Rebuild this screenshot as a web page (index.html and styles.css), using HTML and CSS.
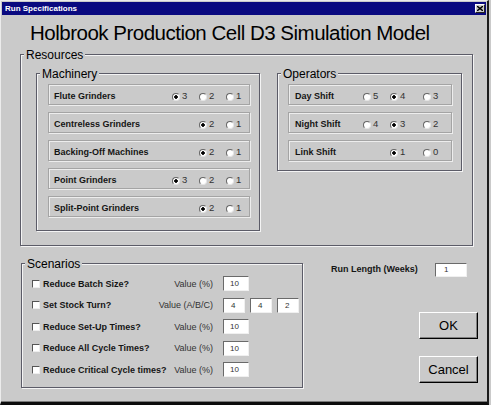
FILE: index.html
```html
<!DOCTYPE html>
<html lang="en">
<head>
    <meta charset="UTF-8">
    <meta name="viewport" content="width=device-width, initial-scale=1.0">
    <title>Run Specifications</title>
    <link rel="stylesheet" href="styles.css">
</head>
<body>
<div class="window">
    <div class="titlebar">
        <span class="titlebar-text">Run Specifications</span>
        <span class="close-btn">
            <svg width="6" height="5" viewBox="0 0 6 5"><path d="M0 0L6 5M6 0L0 5" stroke="#000" stroke-width="1.4"/></svg>
        </span>
    </div>

    <h1 class="heading">Holbrook Production Cell D3 Simulation Model</h1>

    <fieldset class="group resources">
        <legend>Resources</legend>
        <div class="resources-body">
            <fieldset class="group machinery">
                <legend>Machinery</legend>
                <div class="group-body">
                    <div class="opt-row mach-row">
                        <span class="row-label">Flute Grinders</span>
                        <span class="radio"><span class="dot on"></span>3</span>
                        <span class="radio"><span class="dot"></span>2</span>
                        <span class="radio"><span class="dot"></span>1</span>
                    </div>
                    <div class="opt-row mach-row">
                        <span class="row-label">Centreless Grinders</span>
                        <span></span>
                        <span class="radio"><span class="dot on"></span>2</span>
                        <span class="radio"><span class="dot"></span>1</span>
                    </div>
                    <div class="opt-row mach-row">
                        <span class="row-label">Backing-Off Machines</span>
                        <span></span>
                        <span class="radio"><span class="dot on"></span>2</span>
                        <span class="radio"><span class="dot"></span>1</span>
                    </div>
                    <div class="opt-row mach-row">
                        <span class="row-label">Point Grinders</span>
                        <span class="radio"><span class="dot on"></span>3</span>
                        <span class="radio"><span class="dot"></span>2</span>
                        <span class="radio"><span class="dot"></span>1</span>
                    </div>
                    <div class="opt-row mach-row">
                        <span class="row-label">Split-Point Grinders</span>
                        <span></span>
                        <span class="radio"><span class="dot on"></span>2</span>
                        <span class="radio"><span class="dot"></span>1</span>
                    </div>
                </div>
            </fieldset>

            <fieldset class="group operators">
                <legend>Operators</legend>
                <div class="group-body">
                    <div class="opt-row oper-row">
                        <span class="row-label">Day Shift</span>
                        <span class="radio"><span class="dot"></span>5</span>
                        <span class="radio"><span class="dot on"></span>4</span>
                        <span class="radio"><span class="dot"></span>3</span>
                    </div>
                    <div class="opt-row oper-row">
                        <span class="row-label">Night Shift</span>
                        <span class="radio"><span class="dot"></span>4</span>
                        <span class="radio"><span class="dot on"></span>3</span>
                        <span class="radio"><span class="dot"></span>2</span>
                    </div>
                    <div class="opt-row oper-row">
                        <span class="row-label">Link Shift</span>
                        <span></span>
                        <span class="radio"><span class="dot on"></span>1</span>
                        <span class="radio"><span class="dot"></span>0</span>
                    </div>
                </div>
            </fieldset>
        </div>
    </fieldset>

    <div class="bottom">
        <fieldset class="group scenarios">
            <legend>Scenarios</legend>
            <div class="scen-body">
                <div class="scen-row">
                    <span class="check"></span>
                    <span class="scen-label">Reduce Batch Size?</span>
                    <span class="value-label">Value (%)</span>
                    <span class="field">10</span>
                </div>
                <div class="scen-row">
                    <span class="check"></span>
                    <span class="scen-label">Set Stock Turn?</span>
                    <span class="value-label">Value (A/B/C)</span>
                    <span class="field short">4</span>
                    <span class="field short">4</span>
                    <span class="field short">2</span>
                </div>
                <div class="scen-row">
                    <span class="check"></span>
                    <span class="scen-label">Reduce Set-Up Times?</span>
                    <span class="value-label">Value (%)</span>
                    <span class="field">10</span>
                </div>
                <div class="scen-row">
                    <span class="check"></span>
                    <span class="scen-label">Reduce All Cycle Times?</span>
                    <span class="value-label">Value (%)</span>
                    <span class="field">10</span>
                </div>
                <div class="scen-row">
                    <span class="check"></span>
                    <span class="scen-label">Reduce Critical Cycle times?</span>
                    <span class="value-label">Value (%)</span>
                    <span class="field">10</span>
                </div>
            </div>
        </fieldset>

        <div class="side">
            <div class="run-row">
                <span class="run-label">Run Length (Weeks)</span>
                <span class="field run">1</span>
            </div>
            <button class="btn">OK</button>
            <button class="btn cancel">Cancel</button>
        </div>
    </div>
</div>
</body>
</html>
```

FILE: styles.css
```css
* {
    box-sizing: border-box;
}
body {
    margin: 0;
    background: #cacaca;
    font-family: "Liberation Sans", Arial, sans-serif;
    color: #151515;
}
.window {
    width: 489px;
    height: 405px;
    background: #cacaca;
    border-top: 1px solid #ececec;
    border-left: 1px solid #ececec;
    border-right: 2px solid #1c1c1c;
    border-bottom: 3px solid #0c0c0c;
    padding: 1px 1px 0 1px;
    box-shadow: inset 0 -1px 0 #7a7a7a;
}
.titlebar {
    display: flex;
    align-items: center;
    justify-content: space-between;
    height: 13px;
    padding: 0 1px 0 3px;
    background: #0a0a80;
}
.titlebar-text {
    color: #fff;
    font-weight: bold;
    font-size: 8px;
}
.close-btn {
    display: flex;
    align-items: center;
    justify-content: center;
    width: 10px;
    height: 9px;
    background: #cacaca;
    border: 1px solid;
    border-color: #fff #222 #222 #fff;
}
.heading {
    margin: 6px 0 0 28px;
    font-size: 20.5px;
    line-height: 24px;
    font-weight: normal;
    letter-spacing: -0.5px;
    color: #000;
}

/* group boxes */
.group {
    margin: 0;
    padding: 0;
    min-width: 0;
    border: 1px solid #5c5c68;
    box-shadow: inset 1px 1px 0 #f4f4f4, 1px 1px 0 #f4f4f4;
}
.group legend {
    margin-left: 3px;
    padding: 2px 2px 0;
    font-size: 12px;
    line-height: 14px;
    background: #cacaca;
    color: #000;
}
.resources {
    margin: 1px 0 0 18px;
    width: 453px;
}
.resources-body {
    display: flex;
    align-items: flex-start;
    gap: 17px;
    padding: 3px 10px 14px 15px;
}
.machinery {
    width: 224px;
}
.operators {
    width: 185px;
}
.group-body {
    display: flex;
    flex-direction: column;
    gap: 7px;
    padding: 3px 9px 13px 11px;
}
.operators .group-body {
    padding: 3px 9px 9px 10px;
}
.opt-row {
    display: grid;
    align-items: center;
    height: 21px;
    padding: 3px 0 0 5px;
    border: 1px solid #a4a4a4;
    box-shadow: inset 1px 1px 0 #ededed, 1px 1px 0 #ededed;
}
.mach-row {
    grid-template-columns: 118px 27px 27px 1fr;
}
.oper-row {
    grid-template-columns: 68px 27px 33px 1fr;
    padding-left: 6px;
}
.row-label {
    font-weight: bold;
    font-size: 9px;
    white-space: nowrap;
}
.radio {
    display: flex;
    align-items: flex-end;
    gap: 2px;
    font-size: 9.5px;
    line-height: 10px;
    color: #333;
}
.dot {
    width: 8px;
    height: 8px;
    border-radius: 50%;
    background: #fff;
    border: 1px solid;
    border-color: #666 #e6e6e6 #e6e6e6 #666;
}
.dot.on {
    background: radial-gradient(circle, #000 0 1.5px, #fff 2px);
}

/* scenarios + buttons */
.bottom {
    display: flex;
    align-items: flex-start;
    margin-top: 9px;
}
.scenarios {
    margin-left: 19px;
    width: 282px;
}
.scen-body {
    padding: 2px 0 6.5px 10px;
}
.scen-row {
    display: flex;
    align-items: center;
    height: 21.5px;
}
.check {
    width: 8px;
    height: 8px;
    margin-right: 3px;
    background: #fff;
    border: 1px solid;
    border-color: #555 #eee #eee #555;
}
.scen-label {
    width: 110px;
    white-space: nowrap;
    font-weight: bold;
    font-size: 9px;
}
.value-label {
    width: 60px;
    margin-right: 10px;
    text-align: right;
    white-space: nowrap;
    font-size: 9px;
    color: #333;
}
.field {
    display: block;
    width: 26px;
    height: 15px;
    padding-left: 6px;
    background: #fff;
    border: 1px solid;
    border-color: #6a6a6a #f0f0f0 #f0f0f0 #6a6a6a;
    font-size: 8px;
    line-height: 13px;
    color: #333;
}
.field.short {
    width: 21.5px;
    padding-left: 7px;
}
.field + .field {
    margin-left: 5.5px;
}
.side {
    display: flex;
    flex-direction: column;
    width: 147px;
    margin-left: 28px;
    padding-top: 8px;
}
.run-row {
    display: flex;
    align-items: flex-start;
    justify-content: space-between;
    width: 136px;
}
.run-label {
    font-weight: bold;
    font-size: 9px;
    line-height: 10px;
    padding-top: 1px;
}
.field.run {
    width: 32px;
    height: 14px;
    padding-left: 8px;
    line-height: 12px;
}
.btn {
    align-self: flex-end;
    width: 59px;
    height: 27px;
    margin-top: 35px;
    padding: 0;
    font-family: "Liberation Sans", Arial, sans-serif;
    font-size: 13px;
    color: #000;
    background: #cacaca;
    border: 1px solid;
    border-color: #fff #000 #000 #fff;
    box-shadow: inset -1px -1px 0 #808080;
}
.btn.cancel {
    margin-top: 17px;
}
```
